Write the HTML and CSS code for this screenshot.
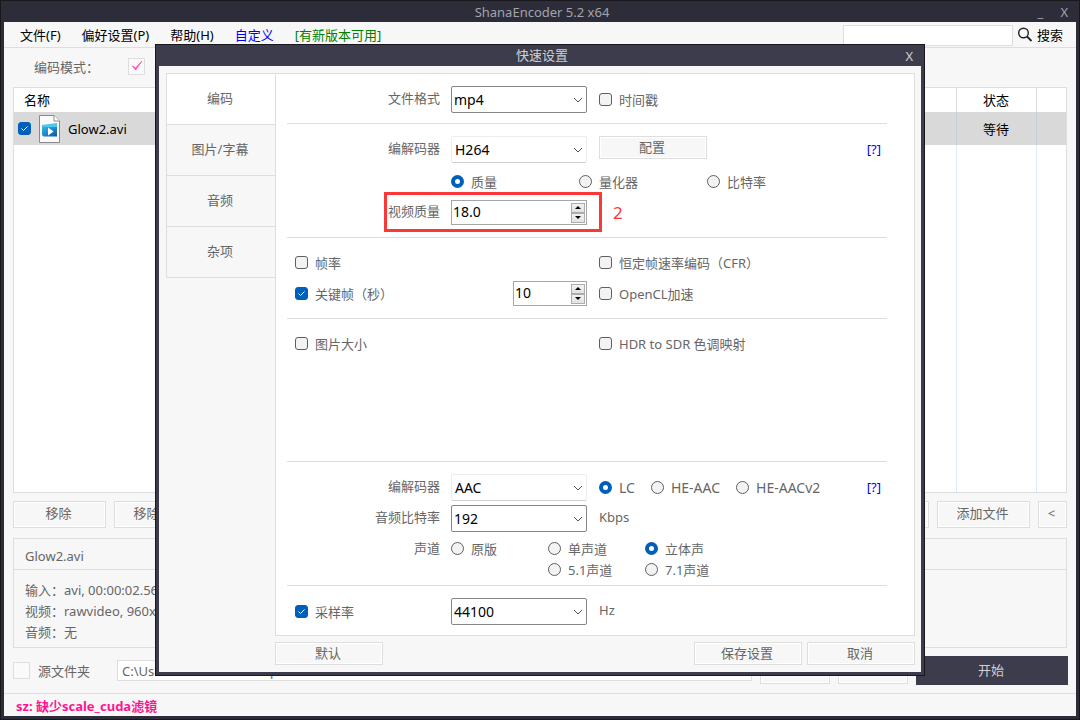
FILE: index.html
```html
<!DOCTYPE html>
<html lang="zh-CN">
  <head>
    <meta charset="utf-8" />
    <title>ShanaEncoder 5.2 x64</title>
    <link rel="stylesheet" href="styles.css">
  </head>
  <body>
    <div class="window">
      <header class="titlebar">
        <h1>ShanaEncoder 5.2 x64</h1>
        <div class="window-buttons">
          <button type="button" title="最小化">_</button>
          <button type="button" title="关闭">X</button>
        </div>
      </header>

      <nav class="menubar">
        <a href="#">文件(F)</a>
        <a href="#">偏好设置(P)</a>
        <a href="#">帮助(H)</a>
        <a href="#" class="custom">自定义</a>
        <a href="#" class="update">[有新版本可用]</a>
        <div class="search">
          <input type="text" id="search" aria-label="搜索">
          <svg width="16" height="16" viewBox="0 0 16 16" fill="none" stroke="#222">
            <circle cx="6.5" cy="6" r="4.8" stroke-width="1.4"/>
            <path d="M10 9.5L14.5 14" stroke-width="1.8"/>
          </svg>
          <label for="search">搜索</label>
        </div>
      </nav>

      <main class="main">
        <div class="mode">
          <label for="mode">编码模式：</label>
          <input type="checkbox" class="flat-check" id="mode" checked>
        </div>

        <div class="file-list">
          <table>
            <thead>
              <tr><th class="name">名称</th><th class="status">状态</th><th class="spare"></th></tr>
            </thead>
            <tbody>
              <tr class="selected">
                <td>
                  <div class="file">
                    <input type="checkbox" class="check" id="file1" checked>
                    <svg width="21" height="28" viewBox="0 0 21 28">
                      <defs>
                        <linearGradient id="clip" x1="0" y1="0" x2="1" y2="1">
                          <stop offset="0" stop-color="#35b5e8"/>
                          <stop offset="1" stop-color="#0b57a8"/>
                        </linearGradient>
                      </defs>
                      <path d="M.5.5H15L20.500 6V27.500H.5z" fill="#fafafa" stroke="#8a8a8a"/>
                      <path d="M15 .5V6H20.500" fill="#fff" stroke="#8a8a8a"/>
                      <path d="M3 10L18 8V12H3z" fill="#4cc8f0"/>
                      <path d="M3 12H18V21.500H4.500L3 20z" fill="url(#clip)"/>
                      <path d="M9 12.500L14.500 16.500L9 20.500z" fill="#fff"/>
                    </svg>
                    <label for="file1">Glow2.avi</label>
                  </div>
                </td>
                <td class="status">等待</td>
                <td></td>
              </tr>
              <tr class="filler"><td></td><td></td><td></td></tr>
            </tbody>
          </table>
        </div>

        <div class="list-buttons">
          <button type="button" class="btn">移除</button>
          <button type="button" class="btn">移除全部</button>
          <button type="button" class="btn right"></button>
          <button type="button" class="btn">添加文件</button>
          <button type="button" class="btn narrow">&lt;</button>
        </div>

        <section class="info">
          <h2>Glow2.avi</h2>
          <ul>
            <li>输入：avi, 00:00:02.560</li>
            <li>视频：rawvideo, 960x540</li>
            <li>音频：无</li>
          </ul>
        </section>

        <div class="output">
          <input type="checkbox" class="flat-check" id="source">
          <label for="source">源文件夹</label>
          <input type="text" class="path" value="C:\Users\Default\Desktop" aria-label="输出文件夹">
          <button type="button" class="btn">浏览</button>
          <button type="button" class="btn"></button>
          <button type="button" class="start">开始</button>
        </div>
      </main>

      <footer class="statusbar">sz: 缺少scale_cuda滤镜</footer>
    </div>

    <div class="dialog" role="dialog" aria-labelledby="dialog-title">
      <header class="dialog-title">
        <h2 id="dialog-title">快速设置</h2>
        <button type="button" title="关闭">X</button>
      </header>
      <div class="dialog-body">
        <nav class="tabs">
          <button type="button" class="active">编码</button>
          <button type="button">图片/字幕</button>
          <button type="button">音频</button>
          <button type="button">杂项</button>
        </nav>

        <form class="panel">
          <section class="group">
            <label class="caption" for="format">文件格式</label>
            <select id="format" class="editable"><option>mp4</option></select>
            <label class="option"><input type="checkbox" class="check">时间戳</label>
          </section>

          <section class="group video">
            <label class="caption" for="vcodec">编解码器</label>
            <select id="vcodec"><option>H264</option></select>
            <div class="line">
              <button type="button" class="btn config">配置</button>
              <a href="#" class="help">[?]</a>
            </div>
            <div class="rate-control">
              <label class="option"><input type="radio" name="rate" class="radio" checked>质量</label>
              <label class="option"><input type="radio" name="rate" class="radio">量化器</label>
              <label class="option"><input type="radio" name="rate" class="radio">比特率</label>
            </div>
            <label class="caption" for="quality">视频质量</label>
            <div class="spin">
              <input type="text" id="quality" value="18.0">
              <div class="arrows">
                <button type="button" class="up" aria-label="增加"></button>
                <button type="button" class="down" aria-label="减少"></button>
              </div>
            </div>
            <div class="mark"></div>
            <span class="mark-number">2</span>
          </section>

          <section class="group frames">
            <label class="option first"><input type="checkbox" class="check">帧率</label>
            <label class="option last"><input type="checkbox" class="check">恒定帧速率编码（CFR）</label>
            <label class="option first"><input type="checkbox" class="check" checked>关键帧（秒）</label>
            <div class="spin short">
              <input type="text" value="10" aria-label="关键帧（秒）">
              <div class="arrows">
                <button type="button" class="up" aria-label="增加"></button>
                <button type="button" class="down" aria-label="减少"></button>
              </div>
            </div>
            <label class="option"><input type="checkbox" class="check">OpenCL加速</label>
          </section>

          <section class="group picture">
            <label class="option first"><input type="checkbox" class="check">图片大小</label>
            <label class="option last"><input type="checkbox" class="check">HDR to SDR 色调映射</label>
          </section>

          <section class="group audio">
            <label class="caption" for="acodec">编解码器</label>
            <select id="acodec"><option>AAC</option></select>
            <div class="line profiles">
              <label class="option"><input type="radio" name="profile" class="radio" checked>LC</label>
              <label class="option"><input type="radio" name="profile" class="radio">HE-AAC</label>
              <label class="option"><input type="radio" name="profile" class="radio">HE-AACv2</label>
              <a href="#" class="help">[?]</a>
            </div>
            <label class="caption" for="bitrate">音频比特率</label>
            <select id="bitrate" class="editable"><option>192</option></select>
            <span class="unit">Kbps</span>
            <span class="caption channel-caption">声道</span>
            <div class="channels">
              <label class="option"><input type="radio" name="channel" class="radio">原版</label>
              <label class="option"><input type="radio" name="channel" class="radio">单声道</label>
              <label class="option"><input type="radio" name="channel" class="radio" checked>立体声</label>
              <label class="option second"><input type="radio" name="channel" class="radio">5.1声道</label>
              <label class="option"><input type="radio" name="channel" class="radio">7.1声道</label>
            </div>
          </section>

          <section class="group">
            <label class="option first"><input type="checkbox" class="check" checked>采样率</label>
            <select class="editable" aria-label="采样率"><option>44100</option></select>
            <span class="unit">Hz</span>
          </section>
        </form>

        <div class="dialog-buttons">
          <button type="button" class="btn">默认</button>
          <button type="button" class="btn save">保存设置</button>
          <button type="button" class="btn">取消</button>
        </div>
      </div>
    </div>
  </body>
</html>
```
FILE: styles.css
```css
* {
  box-sizing: border-box;
}
body {
  margin: 0;
  color: #666;
  font: 13px/20px "Noto Sans", "Noto Sans CJK SC", sans-serif;
}
button, input, select {
  margin: 0;
  font: inherit;
  color: inherit;
}
button {
  padding: 0;
}
a {
  color: inherit;
  text-decoration: none;
}
h1, h2, ul {
  margin: 0;
  padding: 0;
  font-size: 13px;
  font-weight: normal;
  list-style: none;
}

/* main window */
.window {
  display: flex;
  flex-direction: column;
  min-height: 100vh;
  border: 1px solid #17171c;
  background: #f7f7f7;
  box-shadow: inset 0 0 0 3px #2d2d3a;
  padding: 0 3px 3px;
}
.titlebar {
  position: relative;
  height: 21px;
  background: #2d2d3a;
  color: #a3a3ab;
  text-align: center;
}
.titlebar h1 {
  padding-left: 4px;
  line-height: 22px;
}
.window-buttons {
  position: absolute;
  right: 8px;
  top: 0;
  display: flex;
  gap: 17px;
}
.window-buttons button, .dialog-title button {
  border: 0;
  background: none;
  line-height: 22px;
}
.menubar {
  display: flex;
  align-items: center;
  gap: 21px;
  height: 26px;
  padding: 1px 13px 0 16px;
  border-bottom: 1px solid #dedede;
  color: #000;
}
.custom {
  color: #00f;
}
.update {
  color: #008000;
}
.search {
  display: flex;
  align-items: center;
  gap: 4px;
  margin-left: auto;
}
.search input {
  width: 170px;
  height: 21px;
  border: 1px solid #dedede;
  background: #fff;
}
.main {
  display: flex;
  flex: 1;
  flex-direction: column;
  padding: 0 9px;
}
.mode {
  display: flex;
  align-items: center;
  gap: 29px;
  height: 39px;
  padding: 0 0 2px 21px;
}
.flat-check {
  appearance: none;
  width: 17px;
  height: 17px;
  border: 1px solid #dedede;
  background: #fafafa;
}
.flat-check:checked {
  background: #fafafa url("data:image/svg+xml,%3Csvg xmlns='http://www.w3.org/2000/svg' viewBox='0 0 15 15'%3E%3Cpath d='M3.500 7L6.500 11L13 2L6.500 9z' fill='%23ff5fb4' stroke='%23ff5fb4'/%3E%3C/svg%3E");
}
.file-list {
  display: flex;
  flex: 1;
  border: 1px solid #dedede;
  background: #fff;
}
.file-list table {
  width: 100%;
  border-collapse: collapse;
  color: #000;
}
.file-list th, .file-list td {
  padding: 0;
  font-weight: normal;
}
.file-list th {
  height: 24px;
}
.file-list th + th {
  border-left: 1px solid #dedede;
}
.file-list td + td {
  border-left: 1px solid #dfe9f9;
}
.file-list .name {
  padding-left: 10px;
  text-align: left;
}
.file-list .status {
  width: 80px;
  text-align: center;
}
.file-list .spare {
  width: 30px;
}
.selected td {
  height: 33px;
  background: #d9d9d9;
}
.file-list .selected td + td {
  border-left-color: #c4cfdf;
}
.filler td {
  height: 100%;
}
.file {
  display: flex;
  align-items: center;
  gap: 8px;
  padding-left: 4px;
}

.btn {
  height: 27px;
  padding: 0 2px 3px 0;
  border: 1px solid #dedede;
  background: #f7f7f7;
  box-shadow: inset 0 0 0 1px #fff;
}
.list-buttons {
  display: flex;
  gap: 8px;
  margin: 8px 0 10px;
}
.list-buttons .btn {
  width: 93px;
}
.list-buttons .right {
  margin-left: auto;
}
.list-buttons .narrow {
  width: 29px;
}
.info {
  border: 1px solid #dedede;
  line-height: 21px;
}
.info h2 {
  height: 31px;
  padding-left: 11px;
  border-bottom: 1px solid #dedede;
  line-height: 34px;
}
.info ul {
  padding: 10px 11px 4px;
}
.output {
  display: flex;
  align-items: center;
  gap: 8px;
  height: 45px;
  margin-right: -1px;
}
.output .path {
  flex: 1;
  height: 21px;
  margin-left: 19px;
  padding: 0 4px;
  border: 1px solid #dedede;
  background: #fff;
}
.output .btn {
  width: 70px;
}
.start {
  width: 152px;
  height: 29px;
  padding: 0 2px 2px 0;
  border: 0;
  background: #3c3c4c;
  color: #d0d0d4;
}
.statusbar {
  height: 23px;
  padding-left: 12px;
  border-top: 1px solid #dedede;
  color: #ff1493;
  font-weight: bold;
  line-height: 25px;
}

/* check boxes and radios */
.check, .radio {
  appearance: none;
  flex: none;
  width: 13px;
  height: 13px;
  border: 1px solid #5f5f5f;
  border-radius: 3px;
  background: #f3f3f3;
}
.check:checked {
  border-color: #005fb8;
  background: #005fb8 url("data:image/svg+xml,%3Csvg xmlns='http://www.w3.org/2000/svg' viewBox='0 0 11 11'%3E%3Cpath d='M2.500 5.500L4.500 7.500L8.500 3.500' fill='none' stroke='white'/%3E%3C/svg%3E");
}
.radio {
  border-radius: 50%;
}
.radio:checked {
  border: 4px solid #005fb8;
  background: #fff;
}
.option {
  display: flex;
  align-items: center;
  gap: 7px;
  white-space: nowrap;
}

/* quick settings dialog */
.dialog {
  position: absolute;
  top: 44px;
  left: 50%;
  width: 770px;
  transform: translateX(-50%);
  border: 1px solid #17171c;
  background: #3c3c4c;
  padding: 0 3px 3px;
}
.dialog-title {
  position: relative;
  height: 21px;
  padding-left: 4px;
  color: #d0d0d4;
  text-align: center;
}
.dialog-title button {
  position: absolute;
  top: 0;
  right: 8px;
}
.dialog-body {
  display: grid;
  grid-template-columns: 109px 1fr;
  padding: 7px 6px 7px 7px;
  background: #f7f7f7;
}
.tabs {
  display: flex;
  flex-direction: column;
}
.tabs button {
  height: 51px;
  padding: 0 2px 3px 0;
  border: 1px solid #dedede;
  border-width: 1px 0 0 1px;
  background: #f7f7f7;
}
.tabs button:last-child {
  height: 52px;
  border-bottom-width: 1px;
}
.tabs .active {
  background: #fff;
}
.panel {
  padding: 0 27px 0 11px;
  border: 1px solid #dedede;
  background: #fff;
}
.group {
  position: relative;
  display: grid;
  grid-template-columns: 152px 136px 1fr;
  align-items: center;
  column-gap: 12px;
  padding: 12px 0 10px;
}
.group + .group {
  border-top: 1px solid #dedede;
}
.first {
  padding-left: 8px;
}
.caption {
  margin-right: -1px;
  padding-bottom: 3px;
  text-align: right;
}
.unit {
  padding-bottom: 3px;
}
select {
  appearance: none;
  width: 136px;
  height: 27px;
  padding: 0 3px;
  border: 1px solid #ececec;
  border-bottom-color: #d0d0d0;
  border-radius: 2px;
  background: #fff url("data:image/svg+xml,%3Csvg xmlns='http://www.w3.org/2000/svg' width='10' height='6'%3E%3Cpath d='M1 1L5 5L9 1' fill='none' stroke='%23555'/%3E%3C/svg%3E") no-repeat right 3px center;
  color: #000;
  font-size: 14px;
}
.editable {
  padding: 0 2px;
  border-color: #868686;
}
.line {
  display: flex;
  align-items: center;
  gap: 16px;
}
.profiles .option {
  font-size: 14px;
}
.help {
  margin-left: auto;
  padding: 0 6px 2px 0;
  color: #00f;
}
.config {
  width: 108px;
  height: 23px;
  margin-bottom: 4px;
}
.video {
  row-gap: 7px;
  padding-bottom: 12px;
}
.rate-control {
  display: grid;
  grid-column: 2 / 4;
  grid-template-columns: repeat(3, 128px);
  height: 23px;
}
.spin {
  display: flex;
  align-items: center;
  height: 25px;
  padding-right: 1px;
  border: 1px solid #a5a5ac;
  background: #fff;
}
.spin input {
  flex: 1;
  min-width: 0;
  padding: 0 1px 1px;
  border: 0;
  background: none;
  color: #000;
  font-size: 14px;
}
.short {
  width: 74px;
  justify-self: end;
}
.arrows {
  display: flex;
  flex-direction: column;
}
.arrows button {
  display: flex;
  align-items: center;
  justify-content: center;
  width: 14px;
  height: 10px;
  border: 1px solid #acacac;
  background: linear-gradient(#f2f2f2, #e2e2e2);
}
.arrows button::before {
  content: "";
  border: 3px solid transparent;
  border-top-width: 0;
  border-bottom-color: #000;
}
.arrows .down::before {
  border-width: 3px 3px 0;
  border-top-color: #000;
}
.mark {
  position: absolute;
  top: 68px;
  left: 97px;
  width: 218px;
  height: 40px;
  border: 3px solid #fb3838;
  pointer-events: none;
}
.mark-number {
  position: absolute;
  top: 79px;
  left: 326px;
  color: #fb3838;
  font-size: 17px;
}
.frames {
  grid-auto-rows: 25px;
  row-gap: 6px;
  padding-bottom: 12px;
}
.last {
  grid-column: 3;
}
.picture {
  grid-auto-rows: 25px;
  padding-bottom: 105px;
}
.audio {
  row-gap: 4px;
  padding-bottom: 5px;
}
.channel-caption {
  align-self: start;
  padding-top: 2px;
}
.channels {
  display: grid;
  grid-column: 2 / 4;
  grid-template-columns: repeat(3, 97px);
  grid-auto-rows: 21px;
  padding-top: 2px;
}
.second {
  grid-column: 2;
}
.dialog-buttons {
  display: flex;
  grid-column: 2;
  gap: 5px;
  padding-top: 6px;
}
.dialog-buttons .btn {
  width: 108px;
  height: 23px;
}
.save {
  margin-left: auto;
}
```
